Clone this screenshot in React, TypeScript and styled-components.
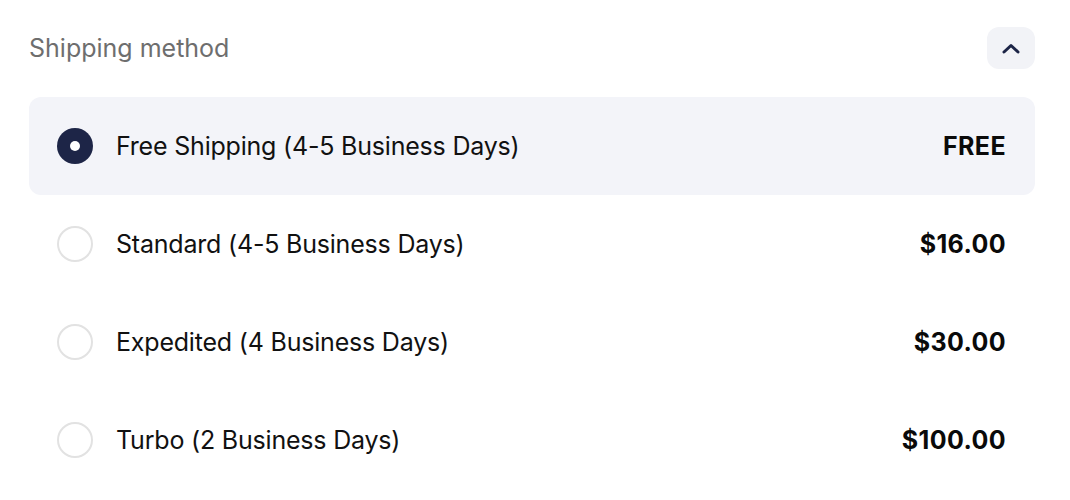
import React, { useState } from 'react';
import styled, { createGlobalStyle } from 'styled-components';

const GlobalStyle = createGlobalStyle`
    body {
        margin: 0;
        background: #ffffff;
        font-family: Inter, "Noto Sans", sans-serif;
    }
`;

const Wrapper = styled.div`
    padding: 27px 35px 0 29px;
`;

const Header = styled.div`
    display: flex;
    align-items: center;
    justify-content: space-between;
    height: 42px;
    margin-bottom: 28px;
`;

const Title = styled.h2`
    margin: 0;
    font-size: 25px;
    font-weight: 400;
    color: #6e6e6e;
    letter-spacing: 0;
`;

const ToggleButton = styled.button`
    width: 48px;
    height: 42px;
    border: none;
    border-radius: 12px;
    background: #f2f3f7;
    display: flex;
    align-items: center;
    justify-content: center;
    padding: 0;
    cursor: pointer;
`;

const List = styled.div`
    display: flex;
    flex-direction: column;
`;

const Row = styled.label<{ $active: boolean }>`
    display: flex;
    align-items: center;
    height: 98px;
    padding: 0 29px 0 28px;
    border-radius: 12px;
    background: ${p => (p.$active ? '#f3f4f9' : 'transparent')};
    cursor: pointer;
`;

const Radio = styled.span<{ $checked: boolean }>`
    width: 36px;
    height: 36px;
    box-sizing: border-box;
    border-radius: 50%;
    flex-shrink: 0;
    display: flex;
    align-items: center;
    justify-content: center;
    border: ${p => (p.$checked ? 'none' : '2px solid #e2e2e2')};
    background: ${p => (p.$checked ? '#1d2547' : '#ffffff')};

    &::after {
        content: '';
        display: ${p => (p.$checked ? 'block' : 'none')};
        width: 10px;
        height: 10px;
        border-radius: 50%;
        background: #ffffff;
    }
`;

const Label = styled.span`
    flex: 1;
    margin-left: 23px;
    font-size: 25px;
    color: #111111;
    letter-spacing: -0.2px;
`;

const Price = styled.span`
    font-size: 25px;
    font-weight: 700;
    color: #0a0a0a;
    letter-spacing: 0.4px;
`;

const options = [
    { label: 'Free Shipping (4-5 Business Days)', price: 'FREE' },
    { label: 'Standard (4-5 Business Days)', price: '$16.00' },
    { label: 'Expedited (4 Business Days)', price: '$30.00' },
    { label: 'Turbo (2 Business Days)', price: '$100.00' },
];

const App: React.FC = () => {
    const [selected, setSelected] = useState(0);

    return (
        <Wrapper>
            <GlobalStyle />
            <Header>
                <Title>Shipping method</Title>
                <ToggleButton aria-label="Collapse">
                    <svg width="18" height="11" viewBox="0 0 18 11" fill="none">
                        <path d="M2 9L9 2.5L16 9" stroke="#1d2547" strokeWidth="3" strokeLinecap="round" strokeLinejoin="round" />
                    </svg>
                </ToggleButton>
            </Header>
            <List>
                {options.map((o, i) => (
                    <Row key={o.label} $active={selected === i} onClick={() => setSelected(i)}>
                        <Radio $checked={selected === i} />
                        <Label>{o.label}</Label>
                        <Price>{o.price}</Price>
                    </Row>
                ))}
            </List>
        </Wrapper>
    );
};

export default App;
